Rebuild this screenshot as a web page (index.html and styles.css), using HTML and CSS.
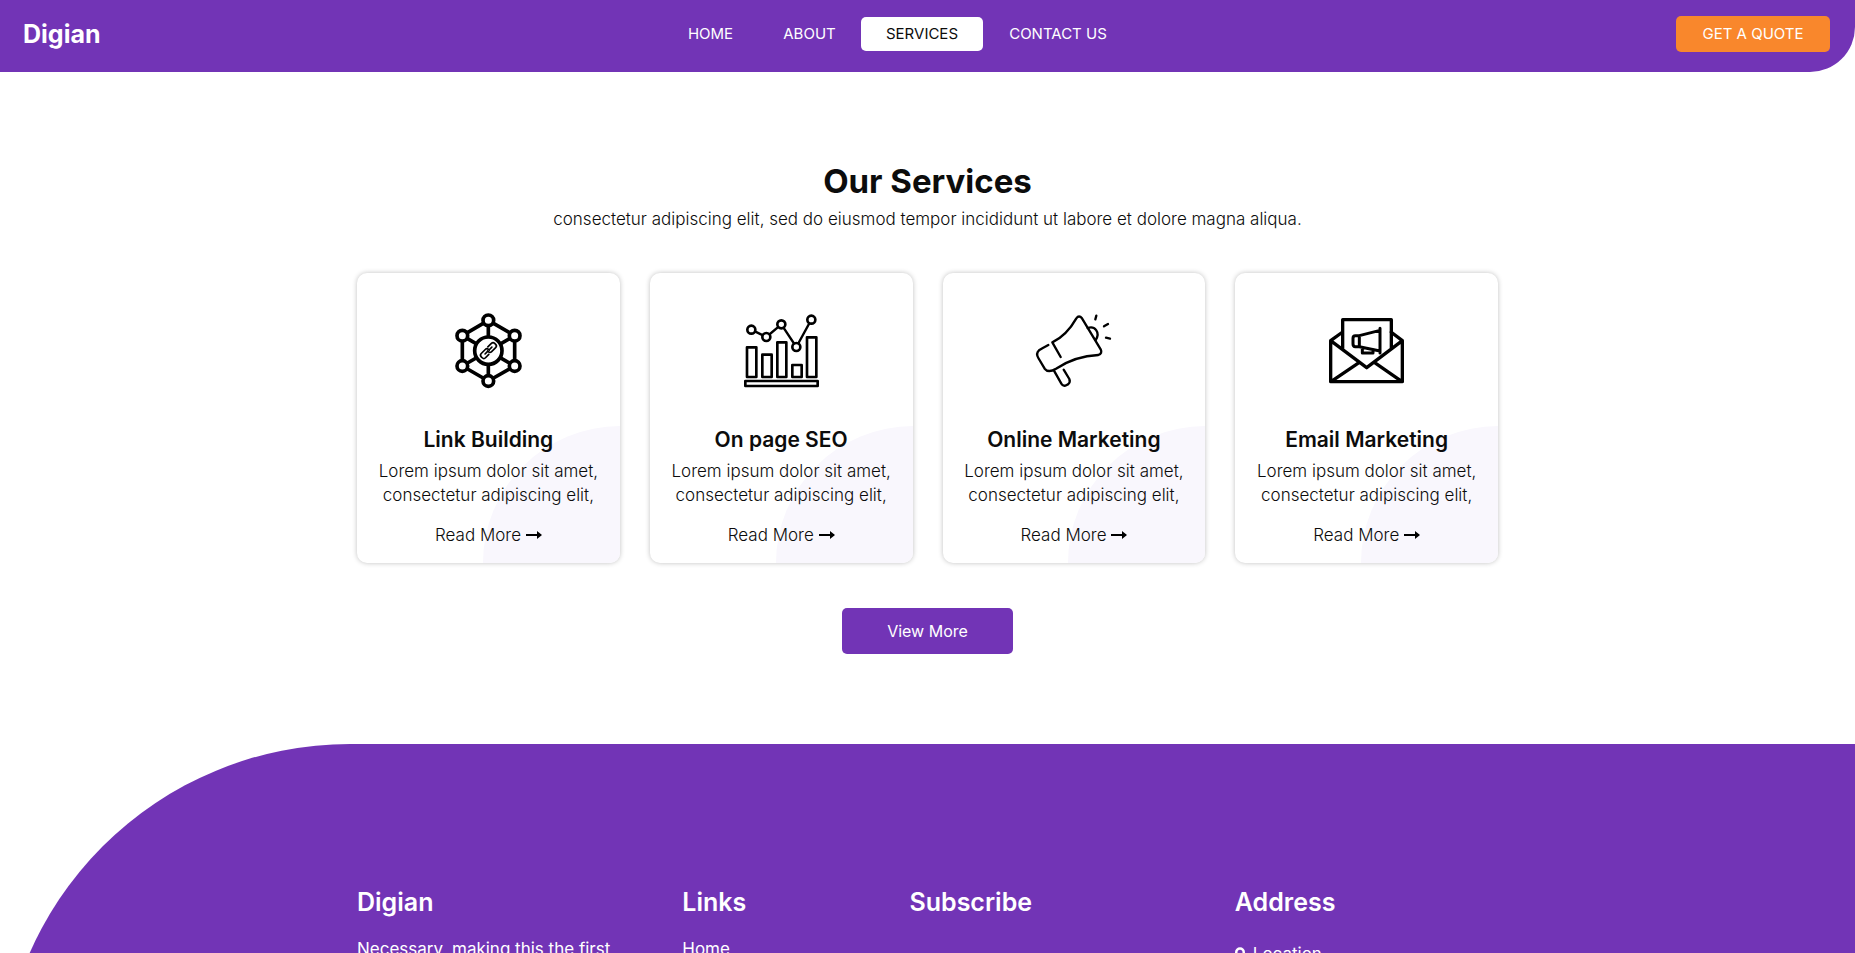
FILE: index.html
```html
<!DOCTYPE html>
<html lang="en">
<head>
<meta charset="utf-8">
<meta name="viewport" content="width=device-width, initial-scale=1">
<title>Digian</title>
<link rel="stylesheet" href="styles.css">
</head>
<body>
<header class="header">
  <a class="brand" href="#">Digian</a>
  <nav class="nav">
    <a class="nav-link nav-home" href="#">HOME</a>
    <a class="nav-link nav-about" href="#">ABOUT</a>
    <a class="nav-link nav-services active" href="#">SERVICES</a>
    <a class="nav-link nav-contact" href="#">CONTACT US</a>
  </nav>
  <a class="quote" href="#">GET A QUOTE</a>
</header>

<main class="services">
  <h1 class="title">Our Services</h1>
  <p class="lead">consectetur adipiscing elit, sed do eiusmod tempor incididunt ut labore et dolore magna aliqua.</p>

  <div class="cards">
    <article class="card">
      <svg class="icon" viewBox="0 0 225 225" aria-hidden="true">
        <g stroke-width="11">
          <path d="M112 22 191 68V159L112 204 34 159V68ZM112 22V204M34 68 191 159M191 68 34 159"/>
          <g fill="#fff">
            <circle cx="112" cy="113" r="41"/>
            <circle cx="112" cy="22" r="16"/><circle cx="191" cy="68" r="16"/>
            <circle cx="191" cy="159" r="16"/><circle cx="112" cy="204" r="16"/>
            <circle cx="34" cy="159" r="16"/><circle cx="34" cy="68" r="16"/>
          </g>
        </g>
        <g stroke-width="5" transform="rotate(-45 112 113)">
          <path d="M105 122H91q-7 0-7-7v-4q0-7 7-7H108q7 0 7 7v3"/>
          <path d="M119 104H134q7 0 7 7v4q0 7-7 7H117q-7 0-7-7v-3"/>
          <path d="M98 113H108M117 113H127"/>
        </g>
      </svg>
      <h2 class="card-title">Link Building</h2>
      <p class="card-text">Lorem ipsum dolor sit amet, consectetur adipiscing elit,</p>
      <a class="more" href="#">Read More <svg class="arrow" viewBox="0 0 16 8" aria-hidden="true"><path d="M0 3H11V0L16 4 11 8V5H0Z"/></svg></a>
    </article>

    <article class="card">
      <svg class="icon" viewBox="0 0 225 225" aria-hidden="true">
        <g stroke-width="8">
          <path d="M9 103H37V192H9ZM55 125H83V192H55ZM100 88H127V192H100ZM145 156H173V192H145ZM189 73H217V192H189ZM4 204H221V219H4Z"/>
          <path stroke-width="7" d="M22 50 67 72 112 34 157 102 202 20"/>
          <g fill="#fff">
            <circle cx="22" cy="50" r="12"/><circle cx="67" cy="72" r="12"/><circle cx="112" cy="34" r="12"/>
            <circle cx="157" cy="102" r="12"/><circle cx="202" cy="20" r="12"/>
          </g>
        </g>
      </svg>
      <h2 class="card-title">On page SEO</h2>
      <p class="card-text">Lorem ipsum dolor sit amet, consectetur adipiscing elit,</p>
      <a class="more" href="#">Read More <svg class="arrow" viewBox="0 0 16 8" aria-hidden="true"><path d="M0 3H11V0L16 4 11 8V5H0Z"/></svg></a>
    </article>

    <article class="card">
      <svg class="icon" viewBox="0 0 225 225" aria-hidden="true">
        <g stroke-width="7">
          <path d="M74 132 49 88C80 73 104 46 121 16Q129 5 138 16L194 109Q200 121 187 126C143 128 98 142 60 167Q37 181 26 167L7 135Q-1 121 9 112Q20 105 37 96"/>
          <path d="M155 45C176 37 194 58 179 81M54 173 76 212Q82 222 92 216L96 214Q104 208 100 198L83 170"/>
          <path d="M181 8 178 19M216 33 204 40M210 74 222 77"/>
        </g>
      </svg>
      <h2 class="card-title">Online Marketing</h2>
      <p class="card-text">Lorem ipsum dolor sit amet, consectetur adipiscing elit,</p>
      <a class="more" href="#">Read More <svg class="arrow" viewBox="0 0 16 8" aria-hidden="true"><path d="M0 3H11V0L16 4 11 8V5H0Z"/></svg></a>
    </article>

    <article class="card">
      <svg class="icon" viewBox="0 0 225 225" aria-hidden="true">
        <g stroke-width="10">
          <path d="M41 57 5 83V206H220V83L186 57M41 106V20H187V106M5 83 113 164 220 83M7 205 90 149M218 205 137 149"/>
          <path stroke-width="9" d="M91 68 153 52V114L91 101ZM91 68H79Q72 68 72 76V93Q72 101 79 101H91M153 46V120M100 104V120H132V111"/>
        </g>
      </svg>
      <h2 class="card-title">Email Marketing</h2>
      <p class="card-text">Lorem ipsum dolor sit amet, consectetur adipiscing elit,</p>
      <a class="more" href="#">Read More <svg class="arrow" viewBox="0 0 16 8" aria-hidden="true"><path d="M0 3H11V0L16 4 11 8V5H0Z"/></svg></a>
    </article>
  </div>

  <a class="view-more" href="#">View More</a>
</main>

<footer class="footer">
  <div class="footer-grid">
    <section>
      <h2 class="footer-title">Digian</h2>
      <p class="footer-text">Necessary, making this the first</p>
    </section>
    <section>
      <h2 class="footer-title">Links</h2>
      <a class="footer-text" href="#">Home</a>
    </section>
    <section>
      <h2 class="footer-title">Subscribe</h2>
    </section>
    <section>
      <h2 class="footer-title">Address</h2>
      <a class="footer-text location" href="#"><svg class="pin" viewBox="0 0 12 16" aria-hidden="true"><path fill-rule="evenodd" d="M6 0a6 6 0 0 1 6 6c0 3-3 7-6 10C3 13 0 9 0 6a6 6 0 0 1 6-6Zm0 3a3 3 0 1 0 0 6 3 3 0 0 0 0-6Z"/></svg>Location</a>
    </section>
  </div>
</footer>
</body>
</html>
```
FILE: styles.css
```css
* {
  box-sizing: border-box;
}

body {
  margin: 0;
  height: 100vh;
  overflow: hidden;
  background: #fff;
  color: #0c0c0c;
  font: 300 17px/24px Inter, "Open Sans", sans-serif;
}

h1, h2, p {
  margin: 0;
}

a {
  color: inherit;
  text-decoration: none;
}

.header {
  display: flex;
  justify-content: space-between;
  align-items: center;
  padding: 16px 25px 20px 23px;
  background: #7234b6;
  color: #fff;
  border-bottom-right-radius: 45px;
}

.brand {
  width: 97px;
  font-size: 25px;
  font-weight: 700;
}

.nav {
  display: flex;
  font-size: 15px;
  font-weight: 400;
}

.nav-link {
  padding: 5px 0;
  border-radius: 5px;
  text-align: center;
}

.nav-home { width: 95px; }
.nav-about { width: 103px; }
.nav-services { width: 122px; }
.nav-contact { width: 150px; }

.active {
  background: #fff;
  color: #0c0c0c;
}

.quote {
  width: 154px;
  padding: 6px 0;
  border-radius: 5px;
  background: #f9872c;
  font-size: 15px;
  font-weight: 400;
  text-align: center;
}

.services {
  display: flex;
  flex-direction: column;
  align-items: center;
  padding: 90px 15px;
}

.title {
  margin-bottom: 7px;
  font-size: 33px;
  font-weight: 700;
  line-height: 38px;
}

.cards {
  display: grid;
  grid-template-columns: repeat(4, 1fr);
  gap: 30px;
  width: 100%;
  max-width: 1141px;
  margin: 42px 0 45px;
}

.card {
  position: relative;
  z-index: 0;
  display: flex;
  flex-direction: column;
  align-items: center;
  overflow: hidden;
  padding: 40px 15px 16px;
  border-radius: 10px;
  background: #fff;
  box-shadow: 0 0 5px rgba(0, 0, 0, 0.25);
  text-align: center;
}

.card::after {
  content: "";
  position: absolute;
  z-index: -1;
  right: 0;
  bottom: 0;
  width: 137px;
  height: 137px;
  border-top-left-radius: 100%;
  background: #f9f7fd;
}

.icon {
  width: 75px;
  height: 75px;
  margin-bottom: 40px;
  overflow: visible;
  fill: none;
  stroke: #000;
  stroke-linecap: round;
  stroke-linejoin: round;
}

.card-title {
  margin-bottom: 7px;
  font-size: 21px;
  font-weight: 600;
}

.card-text {
  margin-bottom: 16px;
}

.arrow {
  width: 16px;
  height: 8px;
  vertical-align: 2px;
}

.view-more {
  padding: 11px 45px;
  border-radius: 5px;
  background: #7234b6;
  color: #fff;
  font-size: 16px;
  font-weight: 400;
}

.footer {
  min-height: 400px;
  padding: 144px 15px 90px;
  border-top-left-radius: 350px;
  background: #7234b6;
  color: #fff;
}

.footer-grid {
  display: grid;
  grid-template-columns: 325fr 227fr 325fr 263fr;
  max-width: 1141px;
  margin: 0 auto;
}

.footer-title {
  margin-bottom: 20px;
  font-size: 25px;
  font-weight: 600;
  line-height: 29px;
}

.footer-text {
  font-weight: 400;
}

.location {
  display: flex;
  align-items: center;
  gap: 8px;
  padding-top: 5px;
}

.pin {
  width: 10px;
  height: 14px;
  fill: #fff;
}
```
